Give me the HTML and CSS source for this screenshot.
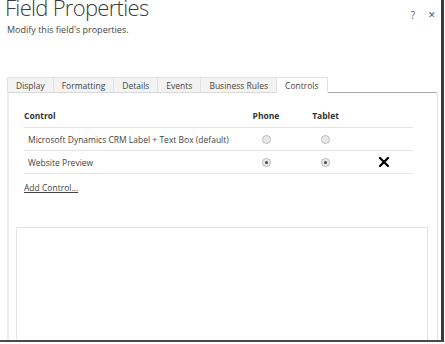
FILE: index.html
```html
<!DOCTYPE html>
<html lang="en">
<head>
    <meta charset="UTF-8">
    <meta name="viewport" content="width=device-width, initial-scale=1.0">
    <title>Field Properties</title>
    <link rel="stylesheet" href="styles.css">
</head>
<body>
    <div class="frame">
        <div class="top">
            <h1 class="title">Field Properties</h1>
            <div class="actions">
                <span class="help">?</span>
                <span class="close">&#x2715;</span>
            </div>
        </div>
        <p class="subtitle">Modify this field's properties.</p>

        <div class="tabs">
            <div class="tab">Display</div>
            <div class="tab">Formatting</div>
            <div class="tab">Details</div>
            <div class="tab">Events</div>
            <div class="tab">Business Rules</div>
            <div class="tab active">Controls</div>
            <div class="tab-fill"></div>
        </div>

        <div class="panel">
            <div class="grid head">
                <div class="c-name">Control</div>
                <div class="c-mid">Phone</div>
                <div class="c-mid">Tablet</div>
                <div></div>
            </div>
            <div class="grid row">
                <div class="c-name">Microsoft Dynamics CRM Label + Text Box (default)</div>
                <div class="c-mid"><span class="radio"></span></div>
                <div class="c-mid"><span class="radio"></span></div>
                <div></div>
            </div>
            <div class="grid row">
                <div class="c-name">Website Preview</div>
                <div class="c-mid"><span class="radio checked"></span></div>
                <div class="c-mid"><span class="radio checked"></span></div>
                <div class="c-mid">
                    <svg class="remove" width="10" height="10" viewBox="0 0 10 10">
                        <path d="M1 1 L9 9 M9 1 L1 9" stroke="#000" stroke-width="2.2" stroke-linecap="square"/>
                    </svg>
                </div>
            </div>
            <a class="add" href="#">Add Control...</a>

            <div class="preview"></div>
        </div>
    </div>
</body>
</html>
```

FILE: styles.css
```css
* {
  margin: 0px;
  padding: 0px;
  box-sizing: border-box;
}

body {
  width: 445px;
  height: 344px;
  overflow: hidden;
  background-color: #fff;
  font-family: "Open Sans", "Noto Sans", sans-serif;
  color: #444;
}

.frame {
  width: 444px;
  height: 342px;
  border-right: 3px solid #3a3a3a;
  border-bottom: 2px solid #4a4a4a;
  overflow: hidden;
}

.top {
  display: flex;
  justify-content: space-between;
  align-items: flex-start;
}

.title {
  font-size: 22px;
  font-weight: 300;
  letter-spacing: -0.7px;
  line-height: 22px;
  margin-top: -4px;
  margin-left: 5px;
  color: #3c3c3c;
}

.actions {
  display: flex;
  gap: 13px;
  margin-top: 8px;
  margin-right: 5px;
  font-size: 10px;
  color: #555;
}

.close {
  font-size: 9px;
}

.subtitle {
  font-size: 9px;
  margin-top: 1px;
  margin-left: 7px;
}

.tabs {
  display: flex;
  margin-top: 41px;
  margin-left: 7px;
  height: 16px;
}

.tab {
  font-size: 8.5px;
  line-height: 15px;
  padding: 0 8px;
  background-color: #f3f3f3;
  border: 1px solid #e2e2e2;
  border-bottom: 1px solid #d8d8d8;
  border-right: none;
  color: #444;
}

.tab.active {
  background-color: #fff;
  border-right: 1px solid #e2e2e2;
  border-bottom: 1px solid #fff;
}

.tab-fill {
  width: 109px;
  border-bottom: 1px solid #aaa;
}

.panel {
  margin-left: 7px;
  width: 431px;
  height: 260px;
  border-left: 2px solid #ececec;
  border-right: 1px solid #e2e2e2;
  padding: 0 24px 0 15px;
}

.grid {
  display: grid;
  grid-template-columns: 212px 60px 59px 57px;
  align-items: center;
  border-bottom: 1px solid #e4e4e4;
  font-size: 8.5px;
}

.head {
  height: 35px;
  padding-top: 10px;
  font-weight: bold;
  color: #333;
}

.row {
  height: 23px;
}

.row .c-name {
  padding-left: 4px;
}

.c-mid {
  display: flex;
  justify-content: center;
}

.radio {
  display: inline-block;
  width: 9px;
  height: 9px;
  border-radius: 50%;
  border: 1px solid #bdbdbd;
  background-color: #eaeaea;
  position: relative;
}

.radio.checked::after {
  content: "";
  position: absolute;
  left: 2px;
  top: 2px;
  width: 3px;
  height: 3px;
  border-radius: 50%;
  background-color: #444;
}

.add {
  display: inline-block;
  margin-top: -2px;
  font-size: 8.5px;
  color: #444;
}

.preview {
  margin-top: 31px;
  margin-left: -8px;
  margin-right: -15px;
  height: 130px;
  border: 1px solid #e4e4e4;
}
```
